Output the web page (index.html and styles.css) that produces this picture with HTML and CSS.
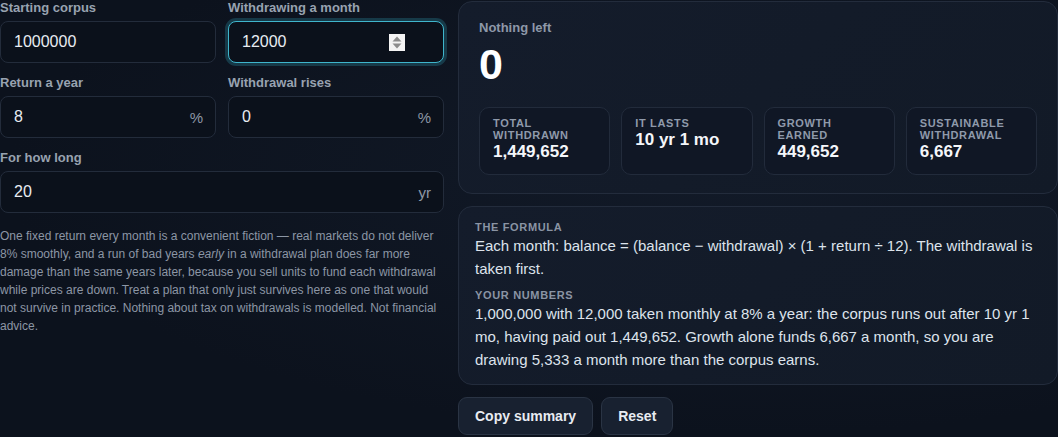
FILE: index.html
```html
<!DOCTYPE html>
<html lang="en">
<head>
    <meta charset="UTF-8">
    <meta name="viewport" content="width=device-width, initial-scale=1.0">
    <title>Corpus drawdown</title>
    <link rel="stylesheet" href="styles.css">
</head>
<body>

    <div class="page">
        <section class="inputs">
            <div class="fields">
                <div class="field">
                    <label for="corpus">Starting corpus</label>
                    <div class="box">
                        <input type="text" id="corpus" value="1000000">
                    </div>
                </div>
                <div class="field">
                    <label for="withdraw">Withdrawing a month</label>
                    <div class="box focused">
                        <input type="text" id="withdraw" value="12000">
                        <span class="spinner">
                            <svg width="16" height="17" viewBox="0 0 16 17">
                                <rect width="16" height="17" fill="#f4f4f4"/>
                                <path d="M8 2.5 L12.5 7.5 L3.5 7.5 Z" fill="#8d8d8d"/>
                                <path d="M3.5 9.5 L12.5 9.5 L8 14.5 Z" fill="#8d8d8d"/>
                            </svg>
                        </span>
                    </div>
                </div>
                <div class="field">
                    <label for="rate">Return a year</label>
                    <div class="box">
                        <input type="text" id="rate" value="8">
                        <span class="suffix">%</span>
                    </div>
                </div>
                <div class="field">
                    <label for="rise">Withdrawal rises</label>
                    <div class="box">
                        <input type="text" id="rise" value="0">
                        <span class="suffix">%</span>
                    </div>
                </div>
                <div class="field wide">
                    <label for="years">For how long</label>
                    <div class="box">
                        <input type="text" id="years" value="20">
                        <span class="suffix">yr</span>
                    </div>
                </div>
            </div>

            <p class="note">One fixed return every month is a convenient fiction — real markets do not deliver 8% smoothly, and a run of bad years <em>early</em> in a withdrawal plan does far more damage than the same years later, because you sell units to fund each withdrawal while prices are down. Treat a plan that only just survives here as one that would not survive in practice. Nothing about tax on withdrawals is modelled. Not financial advice.</p>
        </section>

        <section class="results">
            <div class="card hero">
                <div class="hero-label">Nothing left</div>
                <div class="hero-value">0</div>
                <div class="stats">
                    <div class="stat">
                        <div class="stat-label">Total withdrawn</div>
                        <div class="stat-value">1,449,652</div>
                    </div>
                    <div class="stat">
                        <div class="stat-label">It lasts</div>
                        <div class="stat-value">10 yr 1 mo</div>
                    </div>
                    <div class="stat">
                        <div class="stat-label">Growth earned</div>
                        <div class="stat-value">449,652</div>
                    </div>
                    <div class="stat">
                        <div class="stat-label">Sustainable withdrawal</div>
                        <div class="stat-value">6,667</div>
                    </div>
                </div>
            </div>

            <div class="card explain">
                <div class="explain-label">The formula</div>
                <p>Each month: balance = (balance − withdrawal) × (1 + return ÷ 12). The withdrawal is taken first.</p>
                <div class="explain-label">Your numbers</div>
                <p>1,000,000 with 12,000 taken monthly at 8% a year: the corpus runs out after 10 yr 1 mo, having paid out 1,449,652. Growth alone funds 6,667 a month, so you are drawing 5,333 a month more than the corpus earns.</p>
            </div>

            <div class="actions">
                <button type="button">Copy summary</button>
                <button type="button">Reset</button>
            </div>
        </section>
    </div>

</body>
</html>
```

FILE: styles.css
```css
body {
    font-family: "Liberation Sans", Arial, sans-serif;
    background-color: #0c121d;
    background-image: radial-gradient(ellipse at 70% 40%, #121a28 0%, #0c121d 70%);
    color: #e3e8ef;
    margin: 0;
    height: 437px;
    overflow: hidden;
}
.page {
    display: grid;
    grid-template-columns: 444px minmax(0, 1fr);
    gap: 14px;
    padding-top: 1px;
}
.inputs {
    min-width: 0;
}
.fields {
    display: grid;
    grid-template-columns: minmax(0, 1fr) minmax(0, 1fr);
    column-gap: 12px;
    row-gap: 12px;
    margin-top: -1px;
}
.field.wide {
    grid-column: 1 / 3;
}
.field label {
    display: block;
    font-size: 13px;
    line-height: 16px;
    font-weight: bold;
    color: #98a2b0;
    margin-bottom: 5px;
}
.box {
    display: flex;
    align-items: center;
    height: 42px;
    box-sizing: border-box;
    border: 1px solid #232c3b;
    border-radius: 8px;
    background-color: #0b111b;
    padding: 0 12px 0 13px;
}
.box.focused {
    border-color: #3fb5cc;
    box-shadow: 0 0 0 3px rgba(40, 130, 150, 0.35);
}
.box input {
    flex: 1;
    width: 100%;
    min-width: 0;
    border: none;
    outline: none;
    background: transparent;
    color: #e8ecf2;
    font-family: inherit;
    font-size: 16px;
    padding: 0;
}
.suffix {
    font-size: 15px;
    color: #8d97a6;
}
.spinner {
    display: flex;
    margin-right: 26px;
}
.note {
    font-size: 12px;
    line-height: 18px;
    color: #8c96a5;
    margin: 14px 0 0;
}
.card {
    border: 1px solid #232c3c;
    border-radius: 14px;
    background-color: #131a28;
    background-image: linear-gradient(135deg, #141c2b 0%, #121a27 100%);
}
.hero {
    padding: 18px 20px 18px;
}
.hero-label {
    font-size: 13px;
    line-height: 16px;
    font-weight: bold;
    color: #8e98a8;
}
.hero-value {
    font-size: 43px;
    line-height: 44px;
    font-weight: bold;
    color: #ffffff;
    margin-top: 6px;
}
.stats {
    display: grid;
    grid-template-columns: repeat(4, 1fr);
    gap: 11px;
    margin-top: 21px;
}
.stat {
    border: 1px solid #222b3b;
    border-radius: 10px;
    background-color: #101725;
    padding: 9px 13px 10px;
    min-height: 47px;
}
.stat-label {
    font-size: 11px;
    line-height: 12px;
    font-weight: bold;
    letter-spacing: 0.06em;
    text-transform: uppercase;
    color: #8f9aab;
}
.stat-value {
    font-size: 17px;
    line-height: 20px;
    font-weight: bold;
    color: #f4f6fa;
    margin-top: 1px;
}
.explain {
    margin-top: 12px;
    padding: 13px 17px 13px 16px;
}
.explain-label {
    font-size: 11px;
    line-height: 14px;
    font-weight: bold;
    letter-spacing: 0.06em;
    text-transform: uppercase;
    color: #8a94a4;
}
.explain p {
    font-size: 15px;
    line-height: 23px;
    color: #dde3ec;
    margin: 0 0 8px;
}
.explain p:last-child {
    margin-bottom: 0;
}
.actions {
    display: flex;
    gap: 8px;
    margin-top: 12px;
}
.actions button {
    height: 38px;
    padding: 0 16px;
    border: 1px solid #2a3444;
    border-radius: 9px;
    background-color: #182130;
    color: #e8ecf2;
    font-family: inherit;
    font-size: 14px;
    font-weight: bold;
    cursor: pointer;
}
```
